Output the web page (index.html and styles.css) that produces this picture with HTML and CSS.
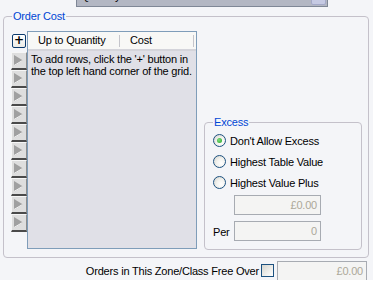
FILE: index.html
```html
<!DOCTYPE html>
<html>
<head>
<meta charset="utf-8">
<link rel="stylesheet" href="styles.css">
</head>
<body>
<div class="panel">
  <div class="toprow">
    <span class="toplabel">Basis:</span>
    <div class="combo"><span class="combo-text">Quantity</span><span class="combo-btn"></span></div>
  </div>
  <div class="group outer">
    <span class="legend">Order Cost</span>
    <div class="outer-body">
      <div class="btncol">
        <div class="addbtn">+</div>
        <div class="rowbtn first"><svg class="tri" width="9" height="11" viewBox="0 0 9 11"><polygon points="0,0 9,5.5 0,11" fill="#a0a0a0"/><polyline points="0,10.5 8.5,5.5" stroke="#f4f4f4" stroke-width="1" fill="none"/></svg></div>
        <div class="rowbtn"><svg class="tri" width="9" height="11" viewBox="0 0 9 11"><polygon points="0,0 9,5.5 0,11" fill="#a0a0a0"/><polyline points="0,10.5 8.5,5.5" stroke="#f4f4f4" stroke-width="1" fill="none"/></svg></div>
        <div class="rowbtn"><svg class="tri" width="9" height="11" viewBox="0 0 9 11"><polygon points="0,0 9,5.5 0,11" fill="#a0a0a0"/><polyline points="0,10.5 8.5,5.5" stroke="#f4f4f4" stroke-width="1" fill="none"/></svg></div>
        <div class="rowbtn"><svg class="tri" width="9" height="11" viewBox="0 0 9 11"><polygon points="0,0 9,5.5 0,11" fill="#a0a0a0"/><polyline points="0,10.5 8.5,5.5" stroke="#f4f4f4" stroke-width="1" fill="none"/></svg></div>
        <div class="rowbtn"><svg class="tri" width="9" height="11" viewBox="0 0 9 11"><polygon points="0,0 9,5.5 0,11" fill="#a0a0a0"/><polyline points="0,10.5 8.5,5.5" stroke="#f4f4f4" stroke-width="1" fill="none"/></svg></div>
        <div class="rowbtn"><svg class="tri" width="9" height="11" viewBox="0 0 9 11"><polygon points="0,0 9,5.5 0,11" fill="#a0a0a0"/><polyline points="0,10.5 8.5,5.5" stroke="#f4f4f4" stroke-width="1" fill="none"/></svg></div>
        <div class="rowbtn"><svg class="tri" width="9" height="11" viewBox="0 0 9 11"><polygon points="0,0 9,5.5 0,11" fill="#a0a0a0"/><polyline points="0,10.5 8.5,5.5" stroke="#f4f4f4" stroke-width="1" fill="none"/></svg></div>
        <div class="rowbtn"><svg class="tri" width="9" height="11" viewBox="0 0 9 11"><polygon points="0,0 9,5.5 0,11" fill="#a0a0a0"/><polyline points="0,10.5 8.5,5.5" stroke="#f4f4f4" stroke-width="1" fill="none"/></svg></div>
        <div class="rowbtn"><svg class="tri" width="9" height="11" viewBox="0 0 9 11"><polygon points="0,0 9,5.5 0,11" fill="#a0a0a0"/><polyline points="0,10.5 8.5,5.5" stroke="#f4f4f4" stroke-width="1" fill="none"/></svg></div>
        <div class="rowbtn"><svg class="tri" width="9" height="11" viewBox="0 0 9 11"><polygon points="0,0 9,5.5 0,11" fill="#a0a0a0"/><polyline points="0,10.5 8.5,5.5" stroke="#f4f4f4" stroke-width="1" fill="none"/></svg></div>
      </div>
      <div class="grid">
        <div class="grid-head">
          <div class="hcol col1">Up to Quantity</div>
          <div class="hcol col2">Cost</div>
        </div>
        <div class="grid-body">To add rows, click the '+' button in<br>the top left hand corner of the grid.</div>
      </div>
      <div class="group excess">
        <span class="legend">Excess</span>
        <div class="radio-row"><span class="radio checked"></span><span>Don't Allow Excess</span></div>
        <div class="radio-row"><span class="radio"></span><span>Highest Table Value</span></div>
        <div class="radio-row"><span class="radio"></span><span>Highest Value Plus</span></div>
        <div class="field-row first-field"><div class="textbox">£0.00</div></div>
        <div class="field-row per-row"><span class="per-label">Per</span><div class="textbox">0</div></div>
      </div>
    </div>
  </div>
  <div class="bottomrow">
    <span class="bottom-label">Orders in This Zone/Class Free Over</span>
    <span class="checkbox"></span>
    <div class="textbox wide">£0.00</div>
  </div>
</div>
</body>
</html>
```

FILE: styles.css
```css
html, body {
  margin: 0;
  padding: 0;
}
body {
  width: 373px;
  height: 301px;
  overflow: hidden;
  background: #ffffff;
  font-family: "Liberation Sans", Arial, sans-serif;
  font-size: 11px;
  letter-spacing: -0.2px;
  color: #000;
}
.panel {
  height: 280px;
  background: #f4f5f8;
  overflow: hidden;
}
.toprow {
  display: flex;
  height: 21px;
  margin-top: -14px;
}
.toplabel {
  margin-left: 10px;
  width: 66px;
  line-height: 20px;
}
.combo {
  width: 252px;
  height: 21px;
  box-sizing: border-box;
  border: 1px solid #7f8796;
  background: #b3b7c3;
  display: flex;
  align-items: flex-start;
}
.combo-text {
  flex: 1;
  padding-left: 4px;
  line-height: 19px;
}
.combo-btn {
  width: 15px;
  height: 17px;
  margin: 1px 1px 0 0;
  box-sizing: border-box;
  border: 1px solid #a4a9c8;
  border-radius: 2px;
  background: #c6cae3;
}
.group {
  position: relative;
  box-sizing: border-box;
  border: 1px solid #c4c1ca;
  border-radius: 4px;
}
.legend {
  position: absolute;
  top: -8px;
  left: 8px;
  padding: 0 1px;
  background: #f4f5f8;
  color: #0046d5;
  line-height: 14px;
}
.outer {
  margin: 9px 0 0 3px;
  width: 366px;
  height: 242px;
}
.outer-body {
  display: flex;
  align-items: flex-start;
  padding: 14px 0 0 7px;
}
.btncol {
  width: 16px;
  display: flex;
  flex-direction: column;
}
.addbtn {
  margin: 3px 0 0 1px;
  width: 14px;
  height: 14px;
  box-sizing: border-box;
  border: 1px solid #0c3b6e;
  border-radius: 2px;
  background: linear-gradient(#ffffff, #ecebe6);
  font-family: "DejaVu Sans", sans-serif;
  font-weight: bold;
  font-size: 12px;
  letter-spacing: 0;
  line-height: 11px;
  text-align: center;
}
.rowbtn {
  width: 16px;
  height: 18px;
  box-sizing: border-box;
  border-top: 1px solid #f6f6f6;
  border-left: 1px solid #f6f6f6;
  border-right: 1px solid #8c8c8c;
  border-bottom: 2px solid #4a4a4a;
  background: #dedede;
  display: flex;
  align-items: center;
  padding-left: 2px;
}
.rowbtn.first {
  margin-top: 4px;
}
.tri {
  display: block;
}
.grid {
  width: 170px;
  height: 218px;
  box-sizing: border-box;
  border: 1px solid #7f9db9;
  background: #e0e0e7;
}
.grid-head {
  height: 19px;
  box-sizing: border-box;
  background: #f8f8f6;
  border-bottom: 2px solid #d4d4da;
  display: flex;
}
.hcol {
  position: relative;
  line-height: 17px;
  padding-left: 10px;
  box-sizing: border-box;
}
.hcol::after {
  content: "";
  position: absolute;
  right: 0;
  top: 3px;
  height: 12px;
  width: 1px;
  background: #c5c5cb;
}
.col1 {
  width: 92px;
}
.col2 {
  width: 74px;
}
.grid-body {
  padding: 2px 0 0 3px;
  line-height: 12px;
  white-space: nowrap;
}
.excess {
  margin: 91px 0 0 7px;
  width: 158px;
  height: 128px;
  padding: 7px 0 0 8px;
}
.radio-row {
  display: flex;
  align-items: center;
  height: 21px;
}
.radio {
  width: 13px;
  height: 13px;
  box-sizing: border-box;
  border-radius: 50%;
  border: 1px solid #1c5180;
  background: radial-gradient(circle at 65% 65%, #ffffff 0%, #f2f2ee 45%, #cfcfc8 100%);
  margin-right: 4px;
  display: flex;
  align-items: center;
  justify-content: center;
}
.radio.checked::after {
  content: "";
  width: 5px;
  height: 5px;
  border-radius: 50%;
  background: radial-gradient(circle at 40% 40%, #7fe07f, #21a121);
}
.field-row {
  display: flex;
  align-items: center;
}
.first-field {
  margin: 2px 0 0 21px;
}
.per-row {
  margin-top: 6px;
}
.per-label {
  width: 21px;
  padding-top: 1px;
}
.textbox {
  width: 87px;
  height: 20px;
  box-sizing: border-box;
  border: 1px solid #a7abb2;
  background: #f4f4f3;
  color: #aca899;
  text-align: right;
  padding-right: 3px;
  line-height: 18px;
}
.bottomrow {
  display: flex;
  align-items: center;
  justify-content: flex-end;
  margin-top: 2px;
  height: 21px;
  padding-right: 6px;
}
.bottom-label {
  padding-top: 1px;
}
.checkbox {
  width: 13px;
  height: 13px;
  box-sizing: border-box;
  border: 1px solid #1c5180;
  background: linear-gradient(135deg, #d6d6d0, #ffffff);
  margin: 0 3px 0 2px;
}
.textbox.wide {
  width: 90px;
}
```
